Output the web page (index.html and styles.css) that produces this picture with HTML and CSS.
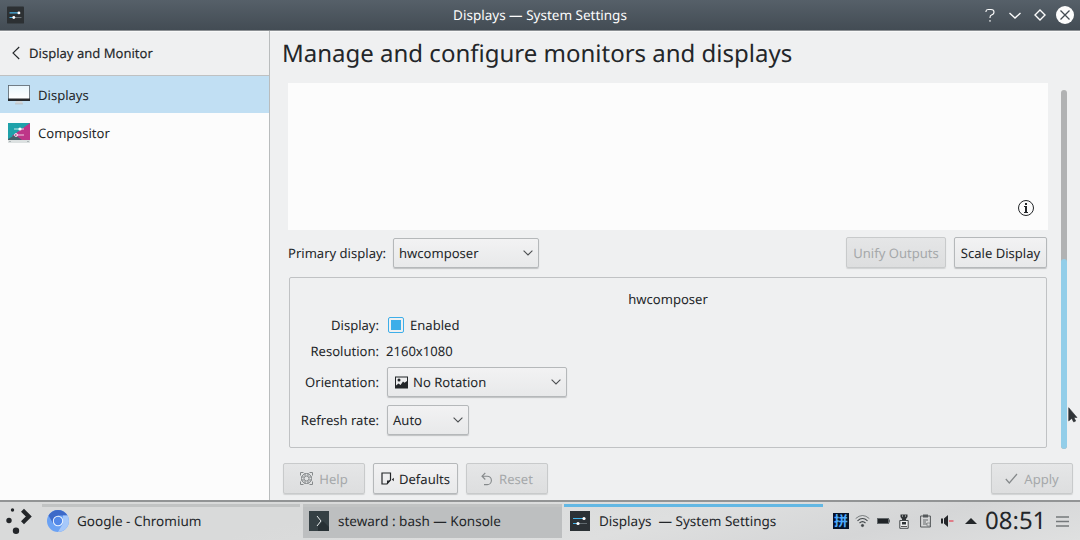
FILE: index.html
```html
<!DOCTYPE html>
<html lang="en">
<head>
<meta charset="utf-8">
<title>Displays — System Settings</title>
<link rel="stylesheet" href="styles.css">
</head>
<body>
<header class="titlebar">
  <svg class="app-icon" width="17" height="18" viewBox="0 0 20 20"><rect width="20" height="20" rx="1" fill="#2c3033"/><path d="M3 7.500h11M3 13h4" stroke="#4bb3e6" stroke-width="1.200"/><path d="M9 13h8" stroke="#6d7478" stroke-width="1.200"/><circle cx="14" cy="7.500" r="1.700" fill="#fff"/><circle cx="8" cy="13" r="1.700" fill="#fff"/></svg>
  <h1 class="window-title">Displays — System Settings</h1>
  <svg class="window-controls" width="100" height="30" viewBox="0 0 100 30" fill="none" stroke="#fcfcfc">
    <path d="M6 12V11Q6.300 9.500 8.200 9.500H11Q14 9.500 14 12Q14 14.300 11.500 15Q10 15.500 10 17.500V18M10 20v1.700" stroke-width="1.100"/>
    <path d="m29.500 13 5.500 5 5.500-5" stroke-width="1.400"/>
    <path d="m60 10 5 5-5 5-5-5z" stroke-width="1.400"/>
    <circle cx="85" cy="15" r="9" fill="#fcfcfc" stroke="none"/><path d="m80.500 10.500 9 9m0-9-9 9" stroke="#434b52" stroke-width="1.300"/>
  </svg>
</header>
<div class="window">
  <nav class="sidebar">
    <div class="back"><svg width="8" height="14" viewBox="0 0 8 14"><path d="M7.200 1 1 7l6.200 6" fill="none" stroke="#232629" stroke-width="1.100"/></svg><span class="back-text">Display and Monitor</span></div>
    <div class="nav-item selected">
      <svg width="22" height="22" viewBox="0 0 22 22"><defs><linearGradient id="screen" x2="0" y2="1"><stop stop-color="#e9f6fc"/><stop offset="1" stop-color="#fff"/></linearGradient></defs><path d="M8 17h6l1 3H7z" fill="#d1d6d9"/><rect x=".5" y="1.500" width="21" height="14" fill="url(#screen)" stroke="#59636a" stroke-width=".8"/><path d="M0 14.500h22V17H0z" fill="#26292c"/><path d="M7 19.500h8v.8H7z" fill="#b4bcc0"/></svg>
      <span>Displays</span>
    </div>
    <div class="nav-item">
      <svg width="22" height="22" viewBox="0 0 22 22"><path d="M0 1h22v17H0z" fill="#1fa2aa"/><path d="M22 1v17H9L4 14z" fill="#be3588"/><path d="m0 17 7-4 7 5H0z" fill="#465f69"/><path d="M0 18h22v3H0z" fill="#dce1e1"/><path d="M6 7h10m-8 6h8" stroke="#fff" stroke-opacity=".75"/><circle cx="12" cy="7" r="1.600" fill="#fff"/><circle cx="8" cy="13" r="1.500" fill="none" stroke="#fff" stroke-width=".8"/><path d="M1 19.500h2m16 0h2" stroke="#9aa3a6" stroke-width=".7"/></svg>
      <span>Compositor</span>
    </div>
  </nav>
  <main class="main">
    <h2 class="heading">Manage and configure monitors and displays</h2>
    <section class="scroll-area">
      <div class="settings">
        <div class="screen-canvas"><svg width="18" height="18" viewBox="0 0 18 18"><circle cx="9" cy="9" r="7.500" fill="none" stroke="#232629" stroke-width="1"/><path d="M8 4h2v2H8zM7 7h3v6h1v1H7v-1h1V8H7z" fill="#232629"/></svg></div>
        <div class="primary-row">
          <span class="primary-label">Primary display:</span>
          <div class="control combo primary-combo"><span>hwcomposer</span><svg class="chevron" viewBox="0 0 10 6"><path d="m.6.700 4.400 4.300L9.400.700"/></svg></div>
          <button class="control unify" disabled>Unify Outputs</button>
          <button class="control scale">Scale Display</button>
        </div>
        <div class="group">
          <h3 class="output-name">hwcomposer</h3>
          <div class="row"><span class="label">Display:</span><span class="check"><i class="check-fill"></i></span><span class="enabled">Enabled</span></div>
          <div class="row"><span class="label">Resolution:</span><span class="resolution">2160x1080</span></div>
          <div class="row tall"><span class="label">Orientation:</span><div class="control combo orientation"><svg class="picture" width="13" height="13" viewBox="0 0 13 13"><path fill="#232629" fill-rule="evenodd" d="M0 .5h13v12H0zm1 1v8l2.500-2 2 1.500L8 5.500l1.500 1.200L12 5V1.500z"/><circle cx="4" cy="4" r="1.500" fill="#232629"/></svg><span>No Rotation</span><svg class="chevron" viewBox="0 0 10 6"><path d="m.6.700 4.400 4.300L9.400.700"/></svg></div></div>
          <div class="row tall refresh-row"><span class="label">Refresh rate:</span><div class="control combo refresh"><span>Auto</span><svg class="chevron" viewBox="0 0 10 6"><path d="m.6.700 4.400 4.300L9.400.700"/></svg></div></div>
        </div>
      </div>
      <div class="scrollbar"><div class="scroll-thumb"></div></div>
    </section>
    <footer class="actions">
      <button class="control help" disabled><svg width="13" height="13" viewBox="0 0 13 13" fill="none" stroke="#85898b"><circle cx="6.500" cy="6.500" r="5"/><circle cx="6.500" cy="6.500" r="2.500"/><path d="M.5 3.500v-3h3m6 0h3v3m0 6v3h-3m-6 0h-3v-3M5 1v3m3-3v3M5 9v3m3-3v3M1 5h3M1 8h3m5-3h3M9 8h3" stroke-width="1"/></svg><span>Help</span></button>
      <button class="control defaults"><svg width="14" height="13" viewBox="0 0 14 13"><path d="M1 1h8.500v7L6 12H1z" fill="none" stroke="#232629" stroke-width="1.200"/><path d="M6 12V8.500h3.500z" fill="#232629"/><path d="m10.800 7.500 2-1.700v3.400z" fill="#232629"/></svg><span>Defaults</span></button>
      <button class="control reset" disabled><svg width="12" height="14" viewBox="0 0 12 14"><path d="M4.300 1 1 4.200l3.300 3.300M1 4.200h5.200a4.200 4.200 0 0 1 0 8.400H3" fill="none" stroke="#85898b" stroke-width="1.100"/></svg><span>Reset</span></button>
      <button class="control apply" disabled><svg width="13" height="12" viewBox="0 0 13 12"><path d="m.8 6 3.500 4L12 1" fill="none" stroke="#85898b" stroke-width="1.200"/></svg><span>Apply</span></button>
    </footer>
  </main>
</div>
<footer class="taskbar">
  <svg class="launcher" width="42" height="38" viewBox="0 0 42 38"><circle cx="12.500" cy="8" r="1.700" fill="#232629"/><circle cx="9" cy="18.500" r="2.700" fill="#232629"/><circle cx="16" cy="28.700" r="3.200" fill="#232629"/><path d="m22.500 8.200 6.300 6.300-6.300 6.300" fill="none" stroke="#232629" stroke-width="4.200"/></svg>
  <div class="task chromium"><svg width="22" height="22" viewBox="0 0 22 22"><circle cx="11" cy="11" r="11" fill="#6ba2f4"/><path d="M1.500 5.500A11 11 0 0 1 20.500 5.500H11L6.200 13.500z" fill="#3d69c8"/><path d="M20.500 5.500A11 11 0 0 1 11 22l4.800-8.300L16 5.500z" fill="#a6c8fa"/><circle cx="11" cy="11" r="5.200" fill="#edf4ff"/><circle cx="11" cy="11" r="4.200" fill="#5288e8"/></svg><span>Google - Chromium</span></div>
  <div class="task konsole"><svg width="20" height="20" viewBox="0 0 20 20"><path fill="#354044" d="M0 0h20v20H0z"/><path fill="#273034" d="m9 15 5-5 6 6v4H9z"/><path d="m8 5 4 5-4 5" fill="none" stroke="#e9eded"/></svg><span>steward : bash — Konsole</span></div>
  <div class="task settings-task"><svg width="20" height="20" viewBox="0 0 20 20"><path fill="#2b3135" d="M0 0h20v20H0z"/><path d="M3 7.500h11M3 12.500h4" stroke="#43b4ea"/><path d="M9 12.500h8" stroke="#60696e"/><circle cx="14" cy="7.500" r="1.600" fill="#fff"/><circle cx="8" cy="12.500" r="1.600" fill="#fff"/></svg><span>Displays&nbsp; — System Settings</span></div>
  <div class="tray">
    <span class="input-method">拼</span>
    <svg class="wifi" width="15" height="14" viewBox="0 0 15 14" fill="none" stroke="#42474a"><path d="M.7 4.500q6.800-6 13.600 0" stroke-width=".9" stroke-opacity=".7"/><path d="M2.500 6.800q5-4.500 10 0M4.500 9q3-2.700 6 0" stroke-width="1.100"/><circle cx="7.500" cy="11.500" r="1.100" fill="#42474a"/></svg>
    <svg class="battery" width="13" height="6" viewBox="0 0 13 6"><path fill="#62676a" d="M0 0h12v1.500h1v3h-1V6H0z"/><path fill="#202427" d="M1 1h10v4H1z"/></svg>
    <svg class="device" width="10" height="15" viewBox="0 0 10 15"><path d="M1.500.500h7V3L7 5v1H3V5L1.500 3z" fill="#303437"/><path d="M3 1.500h1v1H3zm3 0h1v1H6z" fill="#ddd"/><path d="M.8 6.500h8.400v7.800H.8z" fill="#eceded" stroke="#45494b"/><path d="M3 8h4v2.500H3z" fill="#303437"/><path d="M2 12.500h6" stroke="#555"/></svg>
    <svg class="clipboard" width="11" height="14" viewBox="0 0 11 14"><path d="M.6 2h9.800v11H.6z" fill="none" stroke="#54585a"/><path d="M3 .5h5v3H3z" fill="#55595b"/><path d="M3 6h5M3 8h3M3 10h4" stroke="#686c6e"/><path d="M7 9h3v3H7z" fill="#d9dadb" stroke="#696d6f" stroke-width=".6"/></svg>
    <svg class="volume" width="13" height="12" viewBox="0 0 13 12"><path fill="#232629" d="M0 3.500h2v5H0zm3 0L7 0v12L3 8.500z"/><path d="M8 6h4.500" stroke="#e34d5d" stroke-width="1.300"/></svg>
    <svg class="tray-arrow" width="12" height="6" viewBox="0 0 12 6"><path d="m6 0 6 6H0z" fill="#232629"/></svg>
    <time class="clock">08:51</time>
    <svg class="menu" width="13" height="11" viewBox="0 0 13 11"><path d="M0 1h13M0 5.500h13M0 10h13" stroke="#75797b" stroke-width="1.400"/></svg>
  </div>
</footer>
<svg class="cursor" width="10" height="17" viewBox="0 0 10 17"><path d="M.7.700v13.200l3-2.500 2 3.600 2-1-1.700-3.500H9z" fill="#303438" stroke="#303438" stroke-width=".6"/></svg>
</body>
</html>
```
FILE: styles.css
```css
* { box-sizing: border-box; }
body { width: 1080px; height: 540px; margin: 0; overflow: hidden; position: relative; color: #232629; background: #eff0f1; font: 13.05px/18px "Noto Sans", "Noto Sans CJK SC", sans-serif; text-rendering: geometricPrecision; white-space: nowrap; }
svg { display: block; flex: none; }
h1, h2, h3 { margin: 0; font-weight: 400; }
button { font: inherit; text-rendering: inherit; }
.titlebar { height: 31px; display: grid; grid-template-columns: 100px 1fr 100px; align-items: center; padding-bottom: 1px; background: linear-gradient(#566069, #434c54); border-bottom: 1px solid #8b8f93; color: #fcfcfc; }
.app-icon { margin-left: 7px; }
.window-title { text-align: center; font-size: 13.5px; }
.window { height: 469px; display: flex; }
.sidebar { width: 270px; flex: none; background: #fcfcfc; border-right: 1px solid #b9bcbd; }
.back { height: 45px; display: flex; align-items: center; gap: 9px; padding: 0 0 1px 12px; background: #eff0f1; border-top: 1px solid #f8f9f9; border-bottom: 1px solid #bfc1c2; }
.back-text { -webkit-text-stroke: .15px; }
.nav-item { height: 38px; display: flex; align-items: center; gap: 8px; padding-left: 8px; }
.selected { height: 37px; background: #c1dff3; }
.selected + .nav-item { height: 39px; }
.main { flex: 1; min-width: 0; display: flex; flex-direction: column; border-top: 1px solid #f8f9f9; }
.heading { height: 51px; padding: 4px 0 0 12px; font-size: 24px; line-height: 36px; }
.scroll-area { display: flex; height: 369px; }
.settings { width: 760px; margin-left: 18px; }
.screen-canvas { height: 147px; background: #fcfcfc; display: flex; align-items: flex-end; justify-content: flex-end; padding: 13px; }
.primary-row { height: 47px; display: flex; align-items: center; padding: 0 1px 2px 0; }
.primary-label { width: 105px; }
.control { border: 1px solid #b5b8ba; border-radius: 2px; height: 31px; padding: 0; color: #232629; background: linear-gradient(#f2f2f3, #e8e9ea); display: flex; align-items: center; justify-content: center; box-shadow: 0 1px 1px #bfc1c3; flex: none; }
.control:disabled { background: linear-gradient(#e5e6e7, #dddedf); color: #a5a8aa; border-color: #c8cacb; box-shadow: 0 1px 1px #d0d2d3; }
.combo { justify-content: flex-start; height: 30px; padding: 0 5px; }
.chevron { width: 10px; height: 6px; margin-left: auto; fill: none; stroke: #4d5052; stroke-width: 1.1; }
.primary-combo { width: 146px; }
.unify { width: 100px; margin-left: auto; }
.scale { width: 93px; margin-left: 8px; }
.group { width: 758px; height: 171px; margin-left: 1px; border: 1px solid #c0c2c4; border-radius: 2px; padding-top: 8px; }
.output-name { height: 26px; font-size: 13.05px; line-height: 26px; text-align: center; }
.row { height: 26px; display: flex; align-items: center; }
.tall { height: 36px; }
.refresh-row { height: 40px; }
.label { width: 89px; display: flex; justify-content: flex-end; margin-right: 7px; }
.check { display: grid; place-items: center; width: 16px; height: 16px; border: 1px solid #3daee9; border-radius: 2px; margin-left: 2px; }
.check-fill { width: 10px; height: 10px; background: #3daee9; }
.enabled { margin-left: 6px; }
.orientation { width: 180px; margin-left: 1px; padding-left: 7px; gap: 5px; }
.refresh { width: 82px; margin-left: 1px; }
.scrollbar { width: 6px; height: 359px; margin: 7px 0 0 13px; border-radius: 3px; background: #b1b2b3; display: flex; align-items: flex-end; overflow: hidden; }
.scroll-thumb { width: 6px; height: 190px; border-radius: 3px; background: #93cee9; }
.actions { height: 48px; display: flex; align-items: flex-start; gap: 8px; padding: 11px 7px 0 13px; }
.actions .control { gap: 6px; }
.help { width: 82px; }
.defaults { width: 85px; }
.actions .defaults { gap: 4px; }
.reset { width: 82px; }
.apply { width: 82px; margin-left: auto; }
.taskbar { height: 40px; display: flex; align-items: flex-start; padding-top: 2px; border-top: 2px solid #929495; background: linear-gradient(166deg, #d9dada 0 30%, #dedfdf 60%, #d5d6d7 80%, #dfe0e0); font-size: 13.5px; }
.launcher { margin-top: -2px; }
.task { height: 34px; display: flex; align-items: center; padding-bottom: 3px; border-top: 3px solid #c1c3c3; }
.chromium { width: 258px; padding-left: 5px; gap: 8px; }
.konsole { width: 259px; margin-left: 3px; padding-left: 6px; gap: 9px; background: #bdbfc0; }
.settings-task { width: 259px; margin-left: 2px; padding-left: 6px; gap: 9px; border-top-color: #63b8e4; }
.tray { height: 34px; display: flex; align-items: center; margin-left: 10px; }
.input-method { width: 16px; height: 16px; background: #071329; color: #4caaff; font: 700 14px/16px "Noto Sans CJK SC", sans-serif; text-align: center; }
.wifi { margin-left: 6px; }
.battery { margin-left: 7px; }
.device { margin-left: 9px; }
.clipboard { margin-left: 11px; }
.volume { margin-left: 10px; }
.tray-arrow { margin-left: 11px; }
.clock { margin-left: 8px; width: 61px; font-size: 24px; line-height: 34px; }
.menu { margin-left: 10px; }
.cursor { position: absolute; left: 1068px; top: 407px; }
```
